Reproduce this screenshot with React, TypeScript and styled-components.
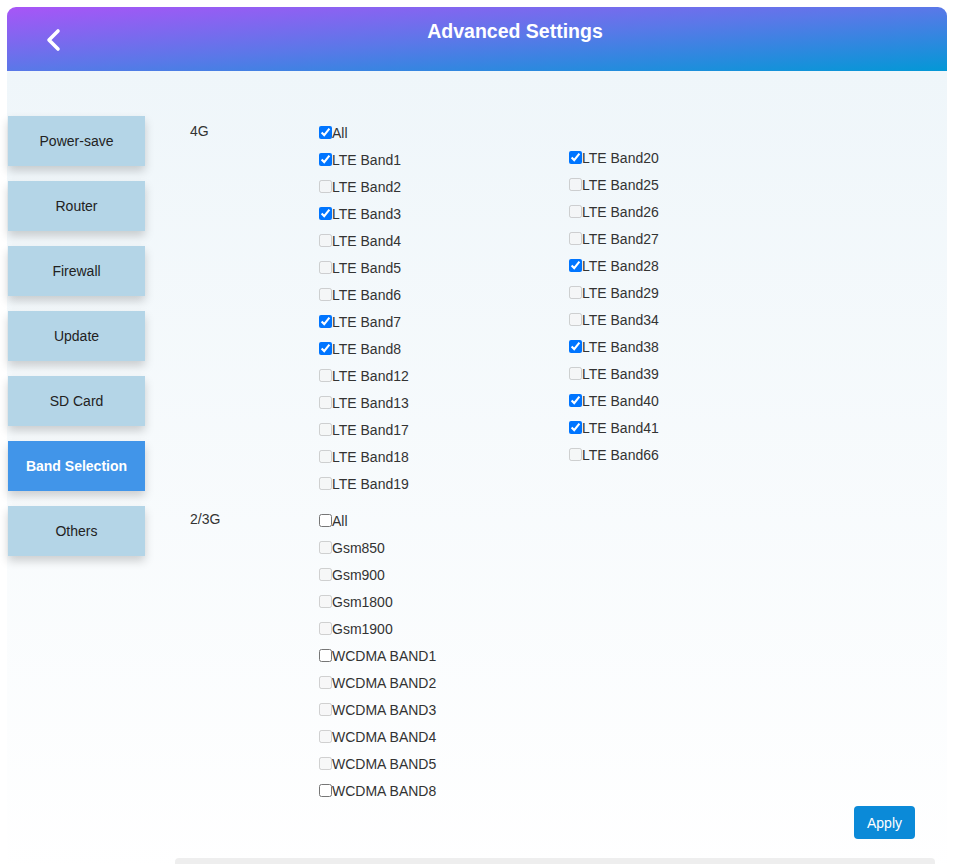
import React from 'react';
import styled, { createGlobalStyle } from 'styled-components';

const GlobalStyle = createGlobalStyle`
  html, body {
    margin: 0;
    padding: 0;
    background: #ffffff;
    font-family: "Liberation Sans", Arial, sans-serif;
    font-size: 14px;
    color: #333333;
  }
`;

interface IBand {
  name: string;
  checked?: boolean;
  disabled?: boolean;
}

const lteLeft: IBand[] = [
  { name: "LTE Band1", checked: true },
  { name: "LTE Band2" },
  { name: "LTE Band3", checked: true },
  { name: "LTE Band4" },
  { name: "LTE Band5" },
  { name: "LTE Band6" },
  { name: "LTE Band7", checked: true },
  { name: "LTE Band8", checked: true },
  { name: "LTE Band12" },
  { name: "LTE Band13" },
  { name: "LTE Band17" },
  { name: "LTE Band18" },
  { name: "LTE Band19" },
];

const lteRight: IBand[] = [
  { name: "LTE Band20", checked: true },
  { name: "LTE Band25" },
  { name: "LTE Band26" },
  { name: "LTE Band27" },
  { name: "LTE Band28", checked: true },
  { name: "LTE Band29" },
  { name: "LTE Band34" },
  { name: "LTE Band38", checked: true },
  { name: "LTE Band39" },
  { name: "LTE Band40", checked: true },
  { name: "LTE Band41", checked: true },
  { name: "LTE Band66" },
];

const legacyBands: IBand[] = [
  { name: "Gsm850", disabled: true },
  { name: "Gsm900", disabled: true },
  { name: "Gsm1800", disabled: true },
  { name: "Gsm1900", disabled: true },
  { name: "WCDMA BAND1" },
  { name: "WCDMA BAND2", disabled: true },
  { name: "WCDMA BAND3", disabled: true },
  { name: "WCDMA BAND4", disabled: true },
  { name: "WCDMA BAND5", disabled: true },
  { name: "WCDMA BAND8" },
];

const menu = ["Power-save", "Router", "Firewall", "Update", "SD Card", "Band Selection", "Others"];

// unchecked LTE bands are shown greyed out in the original page
const lteDisabled = (b: IBand) => !b.checked;

const BandItem: React.FC<{ band: IBand; disabled?: boolean }> = ({ band, disabled }) => (
  <Item>
    <Check type="checkbox" checked={!!band.checked} disabled={disabled} readOnly />
    {band.name}
  </Item>
);

export default function App() {
  return (
    <>
      <GlobalStyle />
      <Page>
        <Card>
          <Header>
            <BackButton>
              <svg width="18" height="24" viewBox="0 0 18 24">
                <polyline
                  points="14,3 5,12 14,21"
                  fill="none"
                  stroke="#ffffff"
                  strokeWidth="3.6"
                  strokeLinecap="round"
                  strokeLinejoin="round"
                />
              </svg>
            </BackButton>
            <Title>Advanced Settings</Title>
          </Header>
          <Body>
            <Sidebar>
              {menu.map((m) => (
                <MenuButton key={m} active={m === "Band Selection"}>
                  {m}
                </MenuButton>
              ))}
            </Sidebar>
            <Main>
              <Section>
                <SectionLabel>4G</SectionLabel>
                <div>
                  <BandItem band={{ name: "All", checked: true }} />
                  <Columns>
                    <Column>
                      {lteLeft.map((b) => (
                        <BandItem key={b.name} band={b} disabled={lteDisabled(b)} />
                      ))}
                    </Column>
                    <Column>
                      {lteRight.map((b) => (
                        <BandItem key={b.name} band={b} disabled={lteDisabled(b)} />
                      ))}
                    </Column>
                  </Columns>
                </div>
              </Section>
              <Section>
                <SectionLabel>2/3G</SectionLabel>
                <div>
                  <BandItem band={{ name: "All" }} />
                  {legacyBands.map((b) => (
                    <BandItem key={b.name} band={b} disabled={b.disabled} />
                  ))}
                </div>
              </Section>
              <Actions>
                <ApplyButton>Apply</ApplyButton>
              </Actions>
              <FooterBar />
            </Main>
          </Body>
        </Card>
      </Page>
    </>
  );
}

const Page = styled.div`
  padding: 7px 10px 0 7px;
`;

const Card = styled.div`
  width: 940px;
`;

const Header = styled.div`
  height: 64px;
  display: flex;
  align-items: flex-start;
  border-radius: 9px 9px 0 0;
  background: linear-gradient(to bottom right, #a855f7 0%, #5a78e8 50%, #0398d6 100%);
`;

const BackButton = styled.div`
  width: 76px;
  align-self: center;
  display: flex;
  padding-left: 37px;
  padding-top: 1px;
  box-sizing: border-box;
`;

const Title = styled.div`
  flex: 1;
  text-align: center;
  padding-top: 13px;
  font-size: 19.5px;
  line-height: 22px;
  font-weight: bold;
  color: #ffffff;
`;

const Body = styled.div`
  display: flex;
  align-items: flex-start;
  padding-top: 45px;
  min-height: 760px;
  background: linear-gradient(to bottom, #eff6fa 0%, #ffffff 100%);
`;

const Sidebar = styled.div`
  width: 137px;
  margin-left: 1px;
  display: flex;
  flex-direction: column;
  gap: 15px;
`;

const MenuButton = styled.div<{ active?: boolean }>`
  height: 50px;
  display: flex;
  align-items: center;
  justify-content: center;
  background-color: ${(p) => (p.active ? "#4195e9" : "#b4d5e7")};
  color: ${(p) => (p.active ? "#ffffff" : "#222222")};
  font-weight: ${(p) => (p.active ? "bold" : "normal")};
  box-shadow: 0 5px 9px rgba(0, 0, 0, 0.18);
  cursor: pointer;
`;

const Main = styled.div`
  flex: 1;
  padding-left: 45px;
  padding-top: 3px;
`;

const Section = styled.div`
  display: grid;
  grid-template-columns: 129px 1fr;
  margin-bottom: 10px;
`;

const SectionLabel = styled.div`
  height: 27px;
  line-height: 27px;
  margin-top: -1px;
  color: #333333;
`;

const Columns = styled.div`
  display: grid;
  grid-template-columns: 250px 250px;
`;

const Column = styled.div`
  display: flex;
  flex-direction: column;
  &:last-child {
    margin-top: -2px;
  }
`;

const Item = styled.label`
  height: 27px;
  display: flex;
  align-items: center;
  color: #333333;
  white-space: nowrap;
`;

const Check = styled.input`
  width: 13px;
  height: 13px;
  margin: 0;
`;

const Actions = styled.div`
  display: flex;
  justify-content: flex-end;
  padding-right: 32px;
  margin-top: -8px;
`;

const ApplyButton = styled.button`
  width: 61px;
  height: 33px;
  border: none;
  border-radius: 4px;
  background-color: #0b8ad8;
  color: #ffffff;
  font-family: "Liberation Sans", Arial, sans-serif;
  font-size: 14px;
  cursor: pointer;
`;

const FooterBar = styled.div`
  height: 12px;
  margin: 19px 12px 0 -15px;
  background-color: #eeeeee;
  border-radius: 4px 4px 0 0;
`;
